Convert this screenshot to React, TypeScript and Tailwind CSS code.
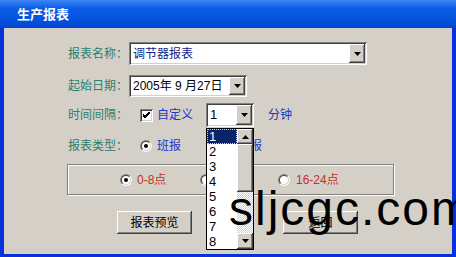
import React from "react";

const FONT = "font-['Liberation_Sans','Noto_Sans_CJK_SC',sans-serif]";
const SUNKEN =
  "bg-white shadow-[inset_1px_1px_#808080,inset_-1px_-1px_#ffffff,inset_2px_2px_#404040,inset_-2px_-2px_#d4d0c8]";
const RAISED =
  "bg-[#d4d0c8] shadow-[inset_-1px_-1px_#404040,inset_1px_1px_#ffffff,inset_-2px_-2px_#808080,inset_2px_2px_#d4d0c8]";

function Arrow({ up = false }: { up?: boolean }) {
  return (
    <svg width="7" height="4" viewBox="0 0 7 4" className="block">
      {up ? <polygon points="0,4 7,4 3.5,0" fill="#000" /> : <polygon points="0,0 7,0 3.5,4" fill="#000" />}
    </svg>
  );
}

function DropBtn() {
  return (
    <div className={`w-[16px] h-full flex items-center justify-center ${RAISED}`}>
      <Arrow />
    </div>
  );
}

function Radio({ checked = false }: { checked?: boolean }) {
  return (
    <div className="w-[12px] h-[12px] rounded-full border border-t-[#808080] border-l-[#808080] border-b-white border-r-white shrink-0">
      <div className="w-full h-full rounded-full border border-t-[#404040] border-l-[#404040] border-b-[#d4d0c8] border-r-[#d4d0c8] bg-white flex items-center justify-center">
        {checked && <div className="w-[4px] h-[4px] rounded-full bg-black" />}
      </div>
    </div>
  );
}

function Checkbox() {
  return (
    <div className={`w-[13px] h-[13px] shrink-0 flex items-center justify-center ${SUNKEN}`}>
      <svg width="7" height="7" viewBox="0 0 7 7" className="block">
        <path d="M0 2 L2 4 L7 -1 M0 3 L2 5 L7 0 M0 4 L2 6 L7 1" stroke="#000" strokeWidth="1" fill="none" />
      </svg>
    </div>
  );
}

export default function App() {
  const label = "text-[12px] text-[#2c7f6e] whitespace-nowrap";
  return (
    <div className={`relative w-[456px] h-[257px] overflow-hidden bg-[#0831d9] flex flex-col ${FONT}`}>
      <div className="h-[28px] shrink-0 flex items-center pl-[17px] bg-[linear-gradient(#3d86f5,#0a5ce6_30%,#0553de_70%,#0344cf)]">
        <span className="text-[13px] font-bold text-white leading-none">生产报表</span>
      </div>
      <div className="flex-1 mx-[4px] mb-[3px] bg-[#d4d0c8] pl-[64px] pt-[14px] flex flex-col">
        {/* Row 1 */}
        <div className="flex items-center h-[23px]">
          <div className={`${label} w-[61px]`}>报表名称：</div>
          <div className={`w-[238px] h-full p-[2px] flex ${SUNKEN}`}>
            <div className="flex-1 flex items-center pl-[2px] text-[12px] text-[#141e88]">调节器报表</div>
            <DropBtn />
          </div>
        </div>
        {/* Row 2 */}
        <div className="flex items-center h-[22px] mt-[10px]">
          <div className={`${label} w-[61px]`}>起始日期：</div>
          <div className={`w-[118px] h-full p-[2px] flex ${SUNKEN}`}>
            <div className="flex-1 flex items-center pl-[2px] text-[12px] text-black whitespace-nowrap">2005年 9 月27日</div>
            <DropBtn />
          </div>
        </div>
        {/* Row 3 */}
        <div className="flex items-center h-[24px] mt-[6px]">
          <div className={`${label} w-[61px]`}>时间间隔：</div>
          <div className="ml-[11px]">
            <Checkbox />
          </div>
          <div className="ml-[4px] w-[36px] text-[12px] text-[#2235c4] whitespace-nowrap">自定义</div>
          <div className={`ml-[13px] w-[48px] h-full p-[2px] flex ${SUNKEN}`}>
            <div className="flex-1 flex items-center pl-[2px] text-[13px] text-black">1</div>
            <DropBtn />
          </div>
          <div className="ml-[14px] text-[12px] text-[#2235c4] whitespace-nowrap">分钟</div>
        </div>
        {/* Row 4 */}
        <div className="flex items-center h-[18px] mt-[10px]">
          <div className={`${label} w-[72px]`}>报表类型：</div>
          <Radio checked />
          <div className="ml-[5px] w-[64px] text-[12px] text-[#2235c4] whitespace-nowrap">班报</div>
          <Radio />
          <div className="ml-[5px] text-[12px] text-[#2235c4] whitespace-nowrap">日报</div>
        </div>
        {/* Group box */}
        <div className="mt-[9px] -ml-px w-[327px] h-[31px] border border-[#808080] shadow-[inset_1px_1px_#ffffff,1px_1px_#ffffff] flex items-center pl-[52px]">
          <div className="flex items-center w-[80px]">
            <Radio checked />
            <span className="ml-[5px] text-[12px] text-[#c0302a] whitespace-nowrap">0-8点</span>
          </div>
          <div className="flex items-center w-[78px]">
            <Radio />
            <span className="ml-[5px] text-[12px] text-[#c0302a] whitespace-nowrap">8-16点</span>
          </div>
          <div className="flex items-center">
            <Radio />
            <span className="ml-[6px] text-[12px] text-[#c0302a] whitespace-nowrap">16-24点</span>
          </div>
        </div>
        {/* Buttons */}
        <div className="mt-[16px] flex h-[23px]">
          <div className={`ml-[49px] w-[75px] h-full flex items-center justify-center text-[12px] text-black ${RAISED}`}>报表预览</div>
          <div className={`ml-[91px] w-[75px] h-full flex items-center justify-center text-[12px] text-black ${RAISED}`}>返回</div>
        </div>
      </div>

      {/* Open dropdown list */}
      <div className="absolute left-[206px] top-[128px] w-[48px] h-[122px] border border-black bg-white flex">
        <div className="flex-1 flex flex-col">
          {[1, 2, 3, 4, 5, 6, 7, 8].map((n) => (
            <div
              key={n}
              className={
                n === 1
                  ? "h-[15px] leading-[15px] pl-[2px] text-[13px] bg-[#0a246a] text-white outline-dotted outline-1 outline-[#e8d8a0] -outline-offset-1"
                  : "h-[15px] leading-[15px] pl-[2px] text-[13px] text-black"
              }
            >
              {n}
            </div>
          ))}
        </div>
        <div className="w-[16px] flex flex-col">
          <div className={`h-[15px] flex items-center justify-center ${RAISED}`}>
            <Arrow up />
          </div>
          <div className={`h-[48px] ${RAISED}`} />
          <div className="flex-1 bg-[repeating-conic-gradient(#ffffff_0_25%,#d4d0c8_0_50%)] bg-[length:2px_2px]" />
          <div className={`h-[16px] flex items-center justify-center ${RAISED}`}>
            <Arrow />
          </div>
        </div>
      </div>

      {/* Watermark */}
      <div className="absolute left-[229px] top-[185px] text-[48px] leading-none tracking-[2px] text-black whitespace-nowrap font-['Liberation_Sans',sans-serif]">
        sljcgc.com
      </div>
    </div>
  );
}
